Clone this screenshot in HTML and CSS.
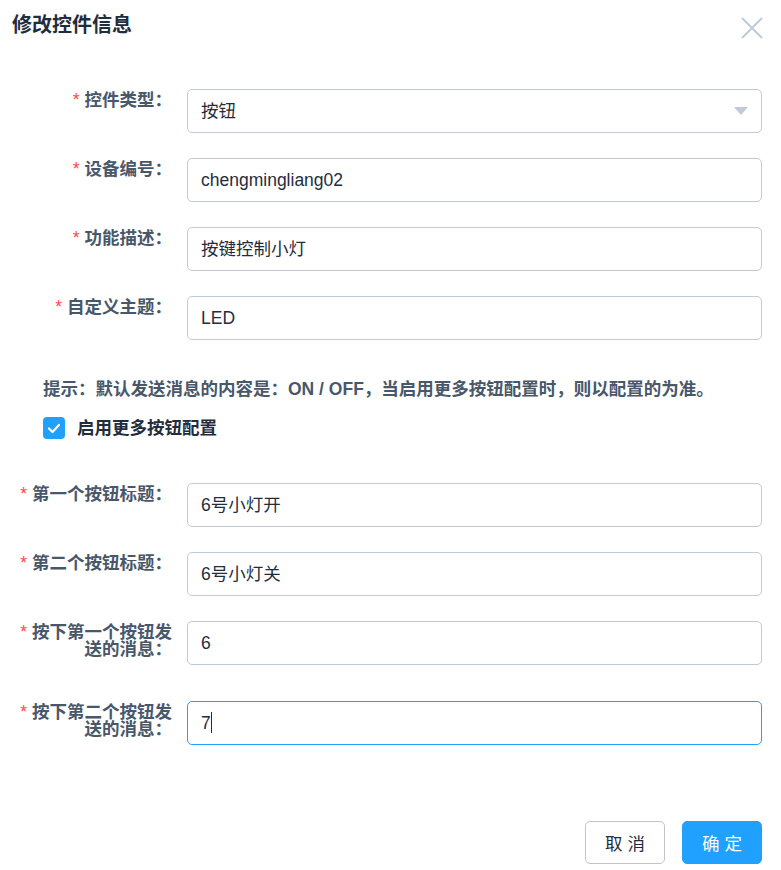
FILE: index.html
```html
<!DOCTYPE html>
<html lang="zh-CN">
<head>
    <meta charset="UTF-8">
    <meta name="viewport" content="width=device-width, initial-scale=1.0">
    <title>修改控件信息</title>
    <link rel="stylesheet" href="styles.css">
</head>
<body>
    <div class="dialog">
        <div class="dialog-header">
            <span class="dialog-title">修改控件信息</span>
            <svg class="close" width="22" height="22" viewBox="0 0 22 22">
                <path d="M1 1 L21 21 M21 1 L1 21" stroke="#bfcbd9" stroke-width="2" fill="none"/>
            </svg>
        </div>

        <div class="form">
            <div class="form-item">
                <label class="label"><span class="req">*</span>控件类型：</label>
                <div class="input select">
                    <span>按钮</span>
                    <i class="arrow"></i>
                </div>
            </div>
            <div class="form-item">
                <label class="label"><span class="req">*</span>设备编号：</label>
                <div class="input">chengmingliang02</div>
            </div>
            <div class="form-item">
                <label class="label"><span class="req">*</span>功能描述：</label>
                <div class="input">按键控制小灯</div>
            </div>
            <div class="form-item">
                <label class="label"><span class="req">*</span>自定义主题：</label>
                <div class="input">LED</div>
            </div>

            <p class="tip">提示：默认发送消息的内容是：ON / OFF，当启用更多按钮配置时，则以配置的为准。</p>

            <div class="checkbox-row">
                <span class="checkbox">
                    <svg width="22" height="22" viewBox="0 0 22 22">
                        <path d="M6 11.5 L9.5 15 L16 8" stroke="#fff" stroke-width="2.2" fill="none" stroke-linecap="round" stroke-linejoin="round"/>
                    </svg>
                </span>
                <span class="checkbox-label">启用更多按钮配置</span>
            </div>

            <div class="more">
                <div class="form-item">
                    <label class="label"><span class="req">*</span>第一个按钮标题：</label>
                    <div class="input">6号小灯开</div>
                </div>
                <div class="form-item">
                    <label class="label"><span class="req">*</span>第二个按钮标题：</label>
                    <div class="input">6号小灯关</div>
                </div>
                <div class="form-item long">
                    <label class="label"><span class="req">*</span>按下第一个按钮发送的消息：</label>
                    <div class="input">6</div>
                </div>
                <div class="form-item">
                    <label class="label"><span class="req">*</span>按下第二个按钮发送的消息：</label>
                    <div class="input focus">7<span class="caret"></span></div>
                </div>
            </div>
        </div>

        <div class="dialog-footer">
            <button class="btn">取 消</button>
            <button class="btn btn-primary">确 定</button>
        </div>
    </div>
</body>
</html>
```

FILE: styles.css
```css
body {
    margin: 0;
    background-color: #fff;
    font-family: "Liberation Sans", "Noto Sans CJK SC", sans-serif;
    font-size: 17.5px;
    color: #1f2d3d;
}
.dialog {
    padding: 13px 19px 0 12px;
}
.dialog-header {
    display: flex;
    justify-content: space-between;
    align-items: flex-start;
}
.dialog-title {
    font-size: 20px;
    font-weight: bold;
    line-height: 24px;
    color: #1f2d3d;
}
.close {
    margin-top: 4px;
    margin-right: -1px;
}
.form {
    margin-top: 50px;
}
.form-item {
    display: flex;
    align-items: flex-start;
    margin-bottom: 25px;
}
.form-item.long {
    margin-bottom: 36px;
}
.label {
    box-sizing: border-box;
    width: 175px;
    flex-shrink: 0;
    padding: 3px 15px 0 0;
    text-align: right;
    line-height: 17px;
    font-weight: bold;
    color: #48576a;
}
.req {
    color: #ff4949;
    margin-right: 5px;
    font-weight: normal;
}
.input {
    flex: 1;
    box-sizing: border-box;
    height: 44px;
    line-height: 42px;
    padding: 0 13px;
    border: 1px solid #bfcbd9;
    border-radius: 5px;
    color: #1f2d3d;
    white-space: nowrap;
}
.input.focus {
    border-color: #20a0ff;
}
.caret {
    display: inline-block;
    width: 1px;
    height: 21px;
    background-color: #1f2d3d;
    vertical-align: -4px;
}
.select {
    display: flex;
    justify-content: space-between;
    align-items: center;
}
.arrow {
    width: 0;
    height: 0;
    border-left: 7px solid transparent;
    border-right: 7px solid transparent;
    border-top: 8px solid #bfcbd9;
}
.tip {
    margin: 37px 0 0 31px;
    line-height: 24px;
    font-weight: bold;
    color: #48576a;
}
.checkbox-row {
    display: flex;
    align-items: center;
    margin: 16px 0 0 31px;
}
.checkbox {
    width: 22px;
    height: 22px;
    border-radius: 4px;
    background-color: #20a0ff;
}
.checkbox svg {
    display: block;
}
.checkbox-label {
    margin-left: 12px;
    line-height: 22px;
    font-weight: bold;
    color: #1f2d3d;
}
.more {
    margin-top: 44px;
}
.dialog-footer {
    display: flex;
    justify-content: flex-end;
    gap: 17px;
    margin-top: 76px;
}
.btn {
    width: 80px;
    height: 43px;
    border: 1px solid #c4c4c4;
    border-radius: 5px;
    background-color: #fff;
    color: #1f2d3d;
    font-family: inherit;
    font-size: 17.5px;
    padding: 0;
}
.btn-primary {
    background-color: #20a0ff;
    border-color: #20a0ff;
    color: #fff;
}
```
